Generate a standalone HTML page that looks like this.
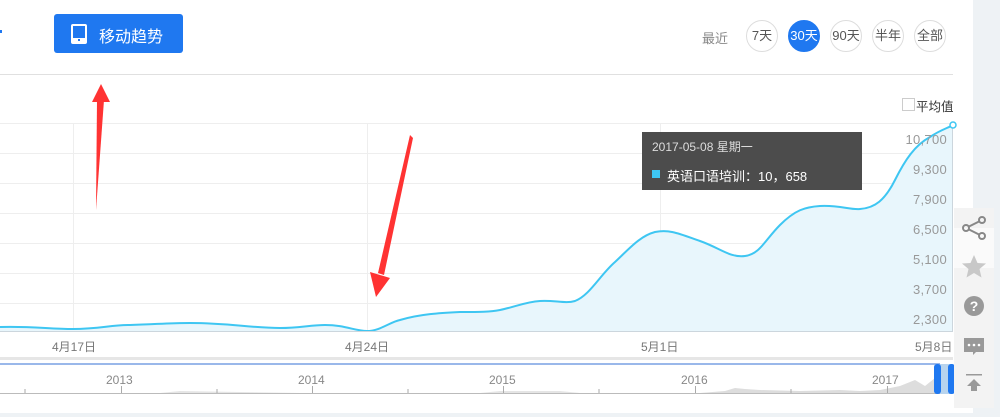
<!DOCTYPE html>
<html><head><meta charset="utf-8"><style>
body{margin:0;width:1000px;height:417px;overflow:hidden;background:#eef2f5;font-family:"Liberation Sans","Noto Sans CJK SC",sans-serif;position:relative}
.main{position:absolute;left:0;top:0;width:973px;height:413px;background:#fff}
.btn{position:absolute;left:54px;top:14px;width:129px;height:39px;background:#1f78f0;border-radius:3px;color:#fff;font-size:16px}
.btn span{position:absolute;left:45px;top:9px}
.c{position:absolute;top:20px;width:30px;height:30px;border:1px solid #ddd;border-radius:50%;font-size:13px;color:#555;text-align:center;line-height:30px;background:#fff}
.c.on{background:#1f78f0;color:#fff;border-color:#1f78f0}
.yl{position:absolute;right:26px;font-size:13px;color:#999;letter-spacing:0.3px}
.xl{position:absolute;top:338px;font-size:12px;color:#777}
.side{position:absolute;left:954px;top:208px;width:40px;height:200px;background:#f3f3f3}
</style></head><body>
<div class="main">
<div style="position:absolute;left:0;top:30px;width:2px;height:3px;background:#1f78f0"></div>
<div class="btn"><svg style="position:absolute;left:17px;top:10px" width="16" height="20"><rect x="1" y="1" width="14" height="18" rx="1" fill="none" stroke="#fff" stroke-width="2"/><rect x="1" y="14" width="14" height="5" fill="#fff"/><rect x="7" y="15" width="2" height="2" fill="#1f78f0"/></svg><span>移动趋势</span></div>
<div style="position:absolute;left:702px;top:28px;font-size:13px;color:#888">最近</div>
<div class="c" style="left:746px">7天</div>
<div class="c on" style="left:788px">30天</div>
<div class="c" style="left:830px">90天</div>
<div class="c" style="left:872px">半年</div>
<div class="c" style="left:914px">全部</div>
<div style="position:absolute;left:0;top:74px;width:953px;height:1px;background:#e0e0e0"></div>
<div style="position:absolute;left:902px;top:98px;width:11px;height:11px;border:1px solid #ccc"></div>
<div style="position:absolute;left:916px;top:96px;font-size:12.5px;color:#333">平均值</div>
<svg style="position:absolute;left:0;top:0" width="973" height="413">
<g stroke="#eeeeee" stroke-width="1">
<line x1="0" y1="123.5" x2="953" y2="123.5"/><line x1="0" y1="153.5" x2="953" y2="153.5"/><line x1="0" y1="183.5" x2="953" y2="183.5"/><line x1="0" y1="213.5" x2="953" y2="213.5"/><line x1="0" y1="243.5" x2="953" y2="243.5"/><line x1="0" y1="273.5" x2="953" y2="273.5"/><line x1="0" y1="303.5" x2="953" y2="303.5"/>
<line x1="73.5" y1="123" x2="73.5" y2="331"/><line x1="367.5" y1="123" x2="367.5" y2="331"/><line x1="660.5" y1="123" x2="660.5" y2="331"/>
</g>
<path d="M0,327 C30,326 50,329 73,329 C100,329 110,325 130,325 C160,324 170,323 190,323 C230,323 250,328 280,328 C300,328 310,325 325,325 C345,325 355,331 367,331 C380,331 390,322 400,320 C420,314 440,313 460,312 C480,312 490,312 500,310 C515,307 525,302 540,301 C555,300 565,304 575,301 C590,295 600,275 615,262 C630,248 640,236 655,232 C670,229 680,234 700,241 C720,248 730,258 745,256 C760,254 765,240 780,225 C795,210 805,207 820,206 C840,205 850,210 860,209 C875,208 885,200 895,180 C905,160 915,145 930,137 C940,130 948,128 953,125 L953,331 L0,331 Z" fill="#e8f6fc" stroke="none"/>
<path d="M0,327 C30,326 50,329 73,329 C100,329 110,325 130,325 C160,324 170,323 190,323 C230,323 250,328 280,328 C300,328 310,325 325,325 C345,325 355,331 367,331 C380,331 390,322 400,320 C420,314 440,313 460,312 C480,312 490,312 500,310 C515,307 525,302 540,301 C555,300 565,304 575,301 C590,295 600,275 615,262 C630,248 640,236 655,232 C670,229 680,234 700,241 C720,248 730,258 745,256 C760,254 765,240 780,225 C795,210 805,207 820,206 C840,205 850,210 860,209 C875,208 885,200 895,180 C905,160 915,145 930,137 C940,130 948,128 953,125" fill="none" stroke="#3ec6f2" stroke-width="2"/>
<line x1="0" y1="331.5" x2="953" y2="331.5" stroke="#ccd6dd"/>
<line x1="952.5" y1="123" x2="952.5" y2="331" stroke="#ccd6dd"/>
<circle cx="953" cy="125" r="3" fill="#fff" stroke="#3ec6f2" stroke-width="1.5"/>
<rect x="0" y="357" width="953" height="3" fill="#e6e6e6"/>
<rect x="0" y="363" width="940" height="2" fill="#9ab8ea"/>
<path d="M700,393 L725,391 L735,388 L745,389 L760,390 L800,391 L840,390 L860,391 L880,390 L900,386 L915,380 L925,386 L935,378 L940,393 Z" fill="#ddd"/>
<path d="M160,393 L180,391 L240,392 L300,393 Z M480,393 L500,391 L560,391 L580,393 Z" fill="#e5e5e5"/>
<line x1="0" y1="393.5" x2="953" y2="393.5" stroke="#bbb"/>
<g stroke="#aaa"><line x1="25" y1="389" x2="25" y2="393"/><line x1="121.5" y1="386" x2="121.5" y2="393"/><line x1="217" y1="389" x2="217" y2="393"/><line x1="312.5" y1="386" x2="312.5" y2="393"/><line x1="408" y1="389" x2="408" y2="393"/><line x1="503.5" y1="386" x2="503.5" y2="393"/><line x1="599" y1="389" x2="599" y2="393"/><line x1="695.5" y1="386" x2="695.5" y2="393"/><line x1="791" y1="389" x2="791" y2="393"/><line x1="887.5" y1="386" x2="887.5" y2="393"/></g>
<rect x="940" y="364" width="13" height="30" fill="#b8d4ee"/>
<rect x="934" y="364" width="7" height="30" rx="3" fill="#1f78f0"/>
<rect x="948" y="364" width="7" height="30" rx="3" fill="#1f78f0"/>
</svg>
<div class="yl" style="top:132px">10,700</div>
<div class="yl" style="top:162px">9,300</div>
<div class="yl" style="top:192px">7,900</div>
<div class="yl" style="top:222px">6,500</div>
<div class="yl" style="top:252px">5,100</div>
<div class="yl" style="top:282px">3,700</div>
<div class="yl" style="top:312px">2,300</div>
<div class="xl" style="left:52px">4月17日</div>
<div class="xl" style="left:345px">4月24日</div>
<div class="xl" style="left:641px">5月1日</div>
<div class="xl" style="left:915px">5月8日</div>
<div style="position:absolute;left:106px;top:373px;font-size:12px;color:#888">2013</div>
<div style="position:absolute;left:298px;top:373px;font-size:12px;color:#888">2014</div>
<div style="position:absolute;left:489px;top:373px;font-size:12px;color:#888">2015</div>
<div style="position:absolute;left:681px;top:373px;font-size:12px;color:#888">2016</div>
<div style="position:absolute;left:872px;top:373px;font-size:12px;color:#888">2017</div>
<div style="position:absolute;left:642px;top:132px;width:220px;height:58px;background:#4c4c4c;color:#fff">
<div style="position:absolute;left:10px;top:6px;font-size:12px;color:#ddd">2017-05-08 星期一</div>
<div style="position:absolute;left:10px;top:38px;width:8px;height:8px;background:#3ec6f2"></div>
<div style="position:absolute;left:25px;top:34px;font-size:13px">英语口语培训：10，658</div>
</div>
<div style="position:absolute;left:92px;top:84px;width:0;height:0;border-left:9px solid transparent;border-right:9px solid transparent;border-bottom:18px solid #f33"></div>
<svg style="position:absolute;left:0;top:0" width="973" height="413"><path d="M97,100 L104,100 L96,210 Z" fill="#f33"/><path d="M410,135 L413,138 L384,275 L378,273 Z" fill="#f33"/><path d="M370,272 L390,278 L376,297 Z" fill="#f33"/></svg>
</div>
<div class="side">
<div style="position:absolute;left:0;top:20px;width:40px;height:40px;background:#fafafa"></div>
<svg width="40" height="200" style="position:absolute;left:0;top:0">
<g fill="none" stroke="#888" stroke-width="2"><circle cx="28" cy="12" r="3"/><circle cx="12" cy="20" r="3"/><circle cx="28" cy="28" r="3"/><line x1="15" y1="18.5" x2="25" y2="13.5"/><line x1="15" y1="21.5" x2="25" y2="26.5"/></g>
<path d="M20,47 L23.5,55 L32,55.5 L25.5,61 L27.5,69.5 L20,65 L12.5,69.5 L14.5,61 L8,55.5 L16.5,55 Z" fill="#c8c8c8"/>
<circle cx="20" cy="98" r="10" fill="#999"/><text x="20" y="103" font-size="14" font-weight="bold" fill="#fff" text-anchor="middle" font-family="Liberation Sans">?</text>
<path d="M10,130 h20 v14 h-8 l-3,3 v-3 h-9 Z" fill="#999"/><circle cx="15" cy="137" r="1.3" fill="#fff"/><circle cx="20" cy="137" r="1.3" fill="#fff"/><circle cx="25" cy="137" r="1.3" fill="#fff"/>
<rect x="12" y="166" width="16" height="1.5" fill="#999"/><path d="M20,171 L27,178 H23 V183 H17 V178 H13 Z" fill="#999"/>
</svg>
</div>
</body></html>
